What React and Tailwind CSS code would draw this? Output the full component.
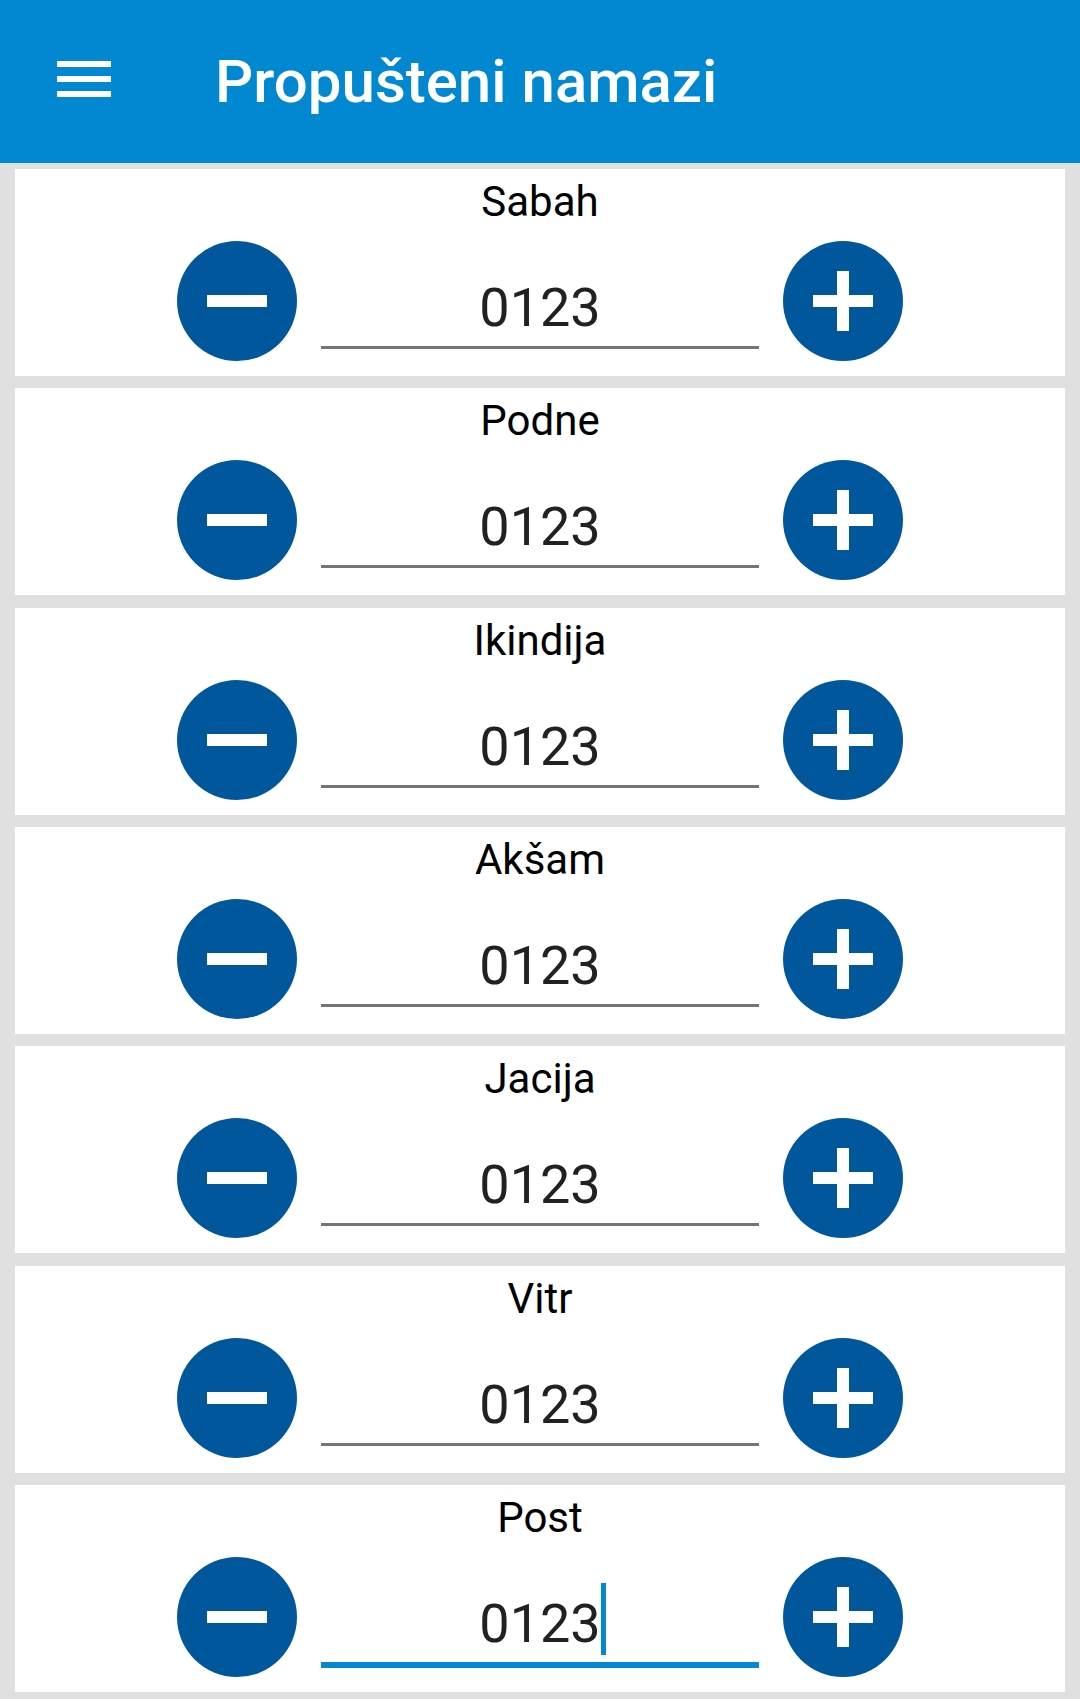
const prayers = ["Sabah", "Podne", "Ikindija", "Akšam", "Jacija", "Vitr", "Post"];

function RoundButton({ plus }) {
  return (
    <button className="w-[120px] h-[120px] rounded-full bg-[#01579B] flex items-center justify-center shrink-0">
      <svg width="60" height="60" viewBox="0 0 60 60">
        <rect x="0" y="24" width="60" height="12" fill="#fff" />
        {plus && <rect x="24" y="0" width="12" height="60" fill="#fff" />}
      </svg>
    </button>
  );
}

function Counter({ label, focused }) {
  return (
    <div className="mx-[15px] h-[207px] bg-white flex flex-col items-center">
      <div className="mt-[12px] text-[42px] leading-[42px] text-black">{label}</div>
      <div className="mt-[18px] flex items-center gap-[24px]">
        <RoundButton />
        <div className={`w-[438px] h-[120px] flex flex-col justify-end ${focused ? "pb-[9px]" : "pb-[12px]"}`}>
          <div className={`pb-[11px] flex justify-center ${focused ? "border-b-[6px] border-[#0288D1]" : "border-b-[3px] border-[#757575]"}`}>
            <span className="relative text-[54px] leading-[54px] text-[#212121]">
              0123
              {focused && <span className="absolute left-full top-[-14px] w-[5px] h-[72px] bg-[#0288D1]" />}
            </span>
          </div>
        </div>
        <RoundButton plus />
      </div>
    </div>
  );
}

export default function App() {
  return (
    <div className="min-h-[1699px] bg-[#E0E0E0] font-['Roboto',sans-serif]">
      <div className="h-[163px] bg-[#0288D1] flex items-center">
        <svg className="ml-[57px] mb-[5px]" width="54" height="36" viewBox="0 0 54 36">
          <rect x="0" y="0" width="54" height="6" fill="#fff" />
          <rect x="0" y="15" width="54" height="6" fill="#fff" />
          <rect x="0" y="30" width="54" height="6" fill="#fff" />
        </svg>
        <div className="ml-[104px] text-[60px] leading-[60px] font-medium text-white">Propušteni namazi</div>
      </div>
      <div className="pt-[6px] flex flex-col gap-[12.33px]">
        {prayers.map((p, i) => (
          <Counter key={p} label={p} focused={i === prayers.length - 1} />
        ))}
      </div>
    </div>
  );
}
